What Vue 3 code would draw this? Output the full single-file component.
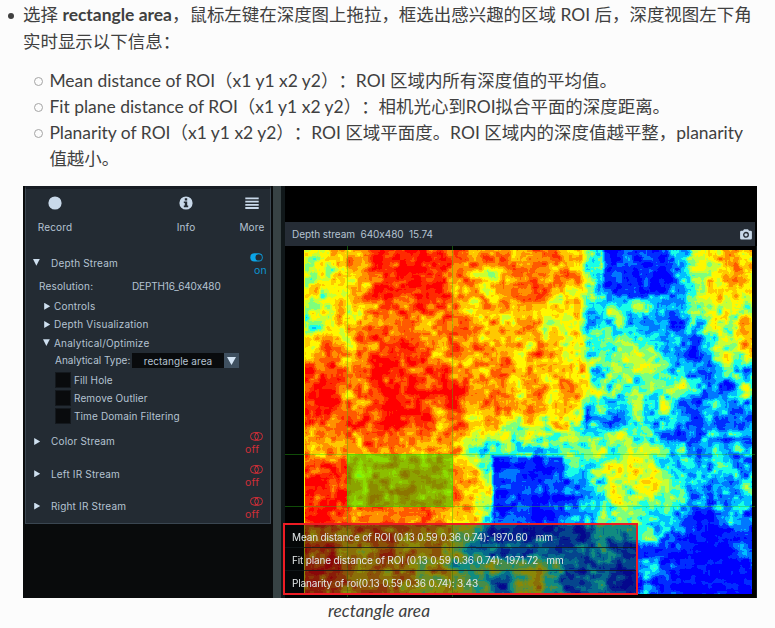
<script setup>
import { ref, onMounted } from 'vue'

const canvas = ref(null)
const W = 448
const H = 344

// Depth samples on a 28 x 21 lattice, hex digits from near-blue (0) to red (c).
const field = [
  '7889bbccb99aa9ba955111236798',
  '6678abccb98789a8954101036798',
  '7669abbbb99789a9763111136787',
  '6778ababa9788987834545435666',
  '588899a999988887734433223657',
  '798aaab99a988888744544431568',
  '8a99bbbb9a989898745566431567',
  'bb9abcbbb98998988735554431536',
  'bc9abccbcb88989887545566431665',
  'bca9bcbb9b899898734454521433',
  'babbacbc8a798777723143321322',
  '99a9baa998666565654644312322',
  '9999a99888545444447566542323',
  'bbb89aaaa9853100236676432342',
  'cbb8aabaa9864111235668543224',
  'bcb9aabaa9864101324665543223',
  'bbaa99aa98843100234554420132',
  'aa99a99987621111114445311012',
  'ab88998876432132123211110011',
  'ab99988785555665322113210000',
  'ba99988776542674223112100000'
].map((r) => [...r].map((v) => parseInt(v, 16)))

const ramp = [
  [0, 0, 255], [0, 45, 255], [0, 120, 255], [0, 191, 255], [24, 255, 230],
  [125, 255, 125], [200, 255, 52], [255, 247, 0], [255, 200, 0],
  [255, 145, 0], [255, 90, 0], [255, 42, 0], [255, 0, 0]
]

function hash(x, y, s) {
  let n = Math.imul(x, 374761393) ^ Math.imul(y, 668265263) ^ Math.imul(s, 1274126177)
  n = Math.imul(n ^ (n >>> 13), 1274126177)
  return ((n ^ (n >>> 16)) >>> 0) / 4294967295 - 0.5
}
const ease = (t) => t * t * (3 - 2 * t)
function sample(fn, x, y) {
  const ix = Math.floor(x)
  const iy = Math.floor(y)
  const fx = ease(x - ix)
  const fy = ease(y - iy)
  const a = fn(ix, iy) * (1 - fx) + fn(ix + 1, iy) * fx
  const b = fn(ix, iy + 1) * (1 - fx) + fn(ix + 1, iy + 1) * fx
  return a * (1 - fy) + b * fy
}
const clamp = (v, lo, hi) => Math.max(lo, Math.min(hi, v))
const cellIn = (lo, hi) => (x, y) => field[clamp(y, 0, 20)][clamp(x, lo, hi)]
const whole = cellIn(0, 27)
const leftWall = cellIn(0, 16)
const rightWall = cellIn(17, 27)
const noise = (x, y, sx, sy, s) => sample((i, j) => hash(i, j, s), x / sx, y / sy)
// 1 inside the box, fading to 0 over a few pixels outside it.
const inside = (x, y, x0, x1, y0, y1) =>
  clamp((Math.min(x - x0, x1 - x, y - y0, y1 - y) + 2) / 4, 0, 1)

onMounted(() => {
  const ctx = canvas.value.getContext('2d')
  const img = ctx.createImageData(W, H)
  for (let y = 0; y < H; y++) {
    for (let x = 0; x < W; x++) {
      const u = x / 16 - 0.5
      const w = y / 16.2 - 0.5
      const edge = clamp((x - 275 - noise(x, y, 7, 7, 21) * 3) / 7, 0, 1)
      const split = sample(leftWall, u, w) * (1 - edge) + sample(rightWall, u, w) * edge
      const low = clamp((y - 168) / 12, 0, 1)
      let v = split * (1 - low) + sample(whole, u, w) * low
      const block = Math.max(inside(x, y, 299, 364, -9, 42), inside(x, y, 188, 259, 206, 275))
      v = v * (1 - block) + Math.min(v, 0.9) * block
      const amp = v < 1.5 ? 0.75 : 1
      v += amp * (noise(x, y, 9, 8, 3) * 2.6 + noise(x + 3, y + 2, 5.3, 5.3, 7) * 3)
      v += amp * (noise(x, y, 1.7, 7, 11) + noise(x, y, 7, 1.7, 13)) * 0.8
      if (x < 1) v = 7
      const c = ramp[clamp(Math.round(v), 0, 12)]
      const p = (y * W + x) * 4
      img.data[p] = c[0]
      img.data[p + 1] = c[1]
      img.data[p + 2] = c[2]
      img.data[p + 3] = 255
    }
  }
  ctx.putImageData(img, 0, 0)
})

const groups = [
  { label: 'Controls', open: false },
  { label: 'Depth Visualization', open: false },
  { label: 'Analytical/Optimize', open: true }
]
const checks = ['Fill Hole', 'Remove Outlier', 'Time Domain Filtering']
const streams = ['Color Stream', 'Left IR Stream', 'Right IR Stream']
const stats = [
  { text: 'Mean distance of ROI (0.13 0.59 0.36 0.74): 1970.60', unit: 'mm' },
  { text: 'Fit plane distance of ROI (0.13 0.59 0.36 0.74): 1971.72', unit: 'mm' },
  { text: 'Planarity of roi(0.13 0.59 0.36 0.74): 3.43', unit: '' }
]
</script>

<template>
  <main class="doc">
    <ul class="outer">
      <li>
        <p>选择 <strong>rectangle area</strong>，鼠标左键在深度图上拖拉，框选出感兴趣的区域 ROI 后，深度视图左下角实时显示以下信息：</p>
        <ul class="inner">
          <li>Mean distance of ROI（x1 y1 x2 y2）：ROI 区域内所有深度值的平均值。</li>
          <li>Fit plane distance of ROI（x1 y1 x2 y2）：相机光心到ROI拟合平面的深度距离。</li>
          <li>Planarity of ROI（x1 y1 x2 y2）：ROI 区域平面度。ROI 区域内的深度值越平整，planarity 值越小。</li>
        </ul>
      </li>
    </ul>
    <figure>
      <div class="viewer">
        <aside class="side">
          <div class="panel">
            <div class="tools">
              <div class="tool rec">
                <svg width="14" height="14" viewBox="0 0 14 14"><circle cx="7" cy="7" r="6.6" fill="#c9d9ea" /></svg>
                <span>Record</span>
              </div>
              <div class="tool info">
                <svg width="14" height="14" viewBox="0 0 14 14">
                  <circle cx="7" cy="7" r="6.6" fill="#c9d9ea" />
                  <path d="M5.800 2.300h2.400v2.200H5.800zM4.800 5.400h3.400v4.200h1v1.700H4.800V9.600h1V7.100h-1z" fill="#232b33" />
                </svg>
                <span>Info</span>
              </div>
              <div class="tool more">
                <svg width="14" height="14" viewBox="0 0 14 14"><path d="M.3 1.500h13.400v1.800H.3zM.3 4.700h13.400v1.800H.3zM.3 7.900h13.400v1.800H.3zM.3 11.100h13.400v1.800H.3z" fill="#c9d9ea" /></svg>
                <span>More</span>
              </div>
            </div>
            <div class="stream first">
              <i class="arrow down"></i><span class="name">Depth Stream</span>
              <div class="switch on">
                <svg width="13" height="9" viewBox="0 0 13 9">
                  <rect x=".3" y=".3" width="12.400" height="8.200" rx="4.100" fill="#0ba5e8" />
                  <circle cx="8.700" cy="4.400" r="3.200" fill="#232b33" />
                </svg>
                <span>on</span>
              </div>
            </div>
            <div class="resolution"><span>Resolution:</span><span>DEPTH16_640x480</span></div>
            <div v-for="g in groups" :key="g.label" class="group">
              <i class="arrow" :class="g.open ? 'down' : 'right'"></i><span>{{ g.label }}</span>
            </div>
            <div class="type">
              <span>Analytical Type:</span>
              <div class="select"><b>rectangle area</b><div class="drop"><i></i></div></div>
            </div>
            <div v-for="c in checks" :key="c" class="check"><i></i><span>{{ c }}</span></div>
            <div v-for="s in streams" :key="s" class="stream">
              <i class="arrow right"></i><span class="name">{{ s }}</span>
              <div class="switch off">
                <svg width="13" height="9" viewBox="0 0 13 9" fill="none" stroke="#cf2f38">
                  <rect x=".5" y=".6" width="12" height="7.600" rx="3.800" />
                  <path d="M4.700.6a3.800 3.800 0 0 1 0 7.600M8.500.6a3.800 3.800 0 0 0 0 7.600" />
                </svg>
                <span>off</span>
              </div>
            </div>
          </div>
        </aside>
        <div class="divider"></div>
        <section class="view">
          <header>
            <span>Depth stream&nbsp; 640x480&nbsp; 15.74</span>
            <svg width="12" height="11" viewBox="0 0 12 11">
              <path d="M1.300 1.800H3L4 .3h4l1 1.500h1.700q1.200 0 1.200 1.200v6.300q0 1.200-1.200 1.200H1.300Q.1 10.500.1 9.300V3q0-1.200 1.200-1.200z" fill="#c9d9ea" />
              <circle cx="6" cy="5.800" r="2.300" fill="none" stroke="#252c35" stroke-width="1.300" />
            </svg>
          </header>
          <div class="scene">
            <canvas ref="canvas" :width="W" :height="H"></canvas>
            <i class="guide v left"></i><i class="guide v right"></i>
            <i class="guide h top"></i><i class="guide h bottom"></i>
            <div class="roi"></div>
            <div class="stats">
              <div v-for="s in stats" :key="s.text"><span>{{ s.text }}</span><span>{{ s.unit }}</span></div>
            </div>
          </div>
        </section>
      </div>
      <figcaption>rectangle area</figcaption>
    </figure>
  </main>
</template>

<style>
body { background: #fcfcfc; }
</style>

<style scoped>
* { box-sizing: border-box; }
.doc {
  width: 775px; height: 628px; overflow: hidden; padding: 1px 18px 0 23px;
  color: #404040; font: 17.47px/26px Lato, "Noto Sans CJK SC", sans-serif;
  text-spacing-trim: space-all;
}
ul { list-style: none; margin: 0; padding: 0; }
li { position: relative; }
p { margin: 0; line-height: 27px; }
.outer { height: 185px; }
.outer > li::before {
  content: ""; position: absolute; left: -15px; top: 12px; width: 6px; height: 6px;
  border-radius: 50%; background: #404040;
}
.inner { padding: 13px 0 0 26.400px; }
.inner > li::before {
  content: ""; position: absolute; left: -15.400px; top: 9px; width: 7px; height: 7px;
  border-radius: 50%; border: 1px solid #a4a4a4;
}
figure { margin: 0; }
figcaption { text-align: center; font-style: italic; width: 712px; line-height: 26px; font-size: 17.33px; }
.viewer {
  width: 734px; height: 412px; display: flex; background: #000; overflow: hidden;
  color: #b5c3d2; font: 10px/14px Inter, sans-serif; letter-spacing: .18px;
}
.side { width: 250px; background: #090b0c; padding-left: 2px; }
.panel {
  width: 246px; height: 338px; background: #232b33; border: 1px solid #3a4651;
  border-top: 3px solid #181d24; padding-left: 1px;
}
.tools { height: 56px; display: flex; padding-top: 7px; }
.tool { display: flex; flex-direction: column; align-items: center; gap: 10px; width: 56px; flex: none; }
.info { margin-left: 75px; }
.more { margin-left: 10px; }
.stream { display: flex; height: 32.300px; align-items: center; padding-left: 6px; }
.stream.first { height: 31px; padding-top: 4px; }
.stream .name { flex: 1; padding-left: 10px; }
.arrow { width: 8px; height: 7px; background: #cfe0f0; flex: none; }
.arrow.right { clip-path: polygon(15% 0, 90% 50%, 15% 100%); }
.arrow.down { clip-path: polygon(0 0, 85% 0, 42% 95%); }
.switch { display: flex; flex-direction: column; width: 25px; align-items: flex-start; font-size: 10.500px; }
.switch svg { margin-left: 5px; display: block; flex: none; }
.switch.on { color: #0b94d0; padding-top: 4px; }
.switch.on span { margin-left: 9px; line-height: 13px; margin-top: 2px; }
.switch.off { color: #cf2f38; padding-top: 6px; }
.switch.off span { line-height: 13px; margin-top: 2px; }
.resolution { height: 20px; display: flex; align-items: center; padding-left: 12px; margin-bottom: 1px; }
.resolution span:first-child { width: 93px; }
.resolution span:last-child { letter-spacing: -.15px; }
.group { height: 18.300px; display: flex; align-items: center; gap: 3px; padding-left: 16px; letter-spacing: .2px; }
.type { height: 18px; display: flex; align-items: center; padding-left: 28px; margin-bottom: .5px; }
.type > span { width: 77px; white-space: nowrap; letter-spacing: 0; margin-top: -2px; }
.select { display: flex; width: 107px; height: 15px; background: #090b0d; }
.select b { flex: 1; font-weight: 400; text-align: center; line-height: 16px; letter-spacing: .04px; }
.drop { width: 15px; background: #3f5060; display: grid; place-items: center; }
.drop i { width: 9px; height: 8px; background: #d5e6f6; clip-path: polygon(0 0, 100% 0, 50% 100%); }
.check { height: 18.300px; display: flex; align-items: center; gap: 3px; padding-left: 28px; letter-spacing: .12px; }
.check i { width: 16px; height: 16px; background: #090b0d; border: 1px solid #14191e; }
.divider { width: 12px; background: #101719; border-left: 8px solid #374244; }
.view { width: 472px; padding-top: 36px; }
.view header {
  height: 24px; margin-right: 2px; background: #252c35; display: flex; letter-spacing: -.05px;
  align-items: center; justify-content: space-between; padding: 0 3px 0 7px;
}
.scene { position: relative; height: 352px; padding: 4px 5px 0 19px; border-right: 1px solid #12191b; }
canvas { display: block; width: 448px; height: 344px; }
.guide { position: absolute; background: rgba(40, 190, 20, .4); }
.v { width: 1px; top: 0; bottom: 1px; }
.h { height: 1px; left: 0; right: 1px; }
.left { left: 62px; }
.guide.right { left: 167px; right: auto; }
.top { top: 208px; }
.guide.bottom { top: 260px; }
.roi { position: absolute; left: 62px; top: 208px; width: 106px; height: 53px; background: rgba(25, 235, 0, .5); }
.stats {
  position: absolute; left: -2px; top: 277px; width: 355px; height: 72px;
  border: 2px solid #ed1c24; color: #e3e7e8; letter-spacing: -.15px;
  background: rgba(10, 14, 16, .48);
}
.stats div { height: 23px; line-height: 24px; padding-left: 7px; display: flex; gap: 8px; white-space: nowrap; border-bottom: 1px solid #12191bcc; }
.stats div:last-child { border: 0; }
</style>
